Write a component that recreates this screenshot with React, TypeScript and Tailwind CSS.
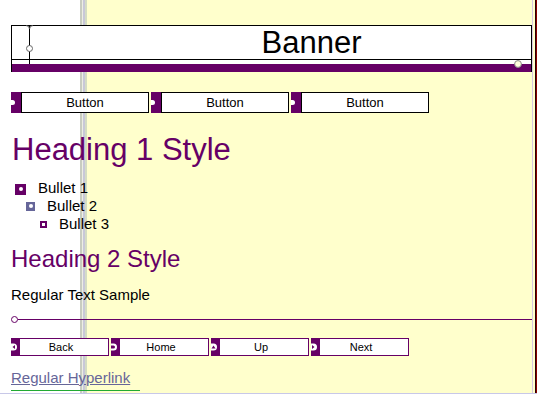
const purple = "#660066";

function TabNotch() {
  return (
    <svg width="10" height="19" viewBox="0 0 10 19" className="block">
      <path d="M0 7 h1.5 a2.5 2.5 0 0 1 0 5 H0 Z" fill="#fff" />
    </svg>
  );
}

function TopButton({ label }: { label: string }) {
  return (
    <div className="flex h-[21px] w-[138px]">
      <div className="w-[10px] h-full bg-[#660066] flex items-center">
        <TabNotch />
      </div>
      <div className="flex-1 h-full border border-black bg-white flex items-center justify-center text-[13px] leading-none text-black">
        {label}
      </div>
    </div>
  );
}

function NavIcon({ kind }: { kind: string }) {
  return (
    <svg width="8" height="16" viewBox="0 0 8 16" className="block">
      {kind === "home" ? (
        <path d="M0 4.5 h2.5 a3.5 3.5 0 0 1 0 7 H0 v-2 h2.5 a1.5 1.5 0 0 0 0 -3 H0 Z" fill="#fff" />
      ) : (
        <>
          <path d="M0 4.5 h2.5 a3.5 3.5 0 0 1 0 7 H0 Z" fill="#fff" />
          {kind === "back" && <path d="M1.5 8 L4 6 V10 Z" fill={purple} />}
          {kind === "up" && <path d="M0.5 9.5 L2.5 6.5 L4.5 9.5 Z" fill={purple} />}
          {kind === "next" && <path d="M1 6 L3.5 8 L1 10 Z" fill={purple} />}
        </>
      )}
    </svg>
  );
}

function NavButton({ label, kind }: { label: string; kind: string }) {
  return (
    <div className="flex h-[18px] w-[98px]">
      <div className="w-[8px] h-full bg-[#660066] flex items-center">
        <NavIcon kind={kind} />
      </div>
      <div className="flex-1 h-full border border-[#660066] bg-white flex items-center justify-center pr-[6px] text-[11px] leading-none text-black">
        {label}
      </div>
    </div>
  );
}

export default function App() {
  return (
    <main
      className="relative w-[537px] h-[394px] overflow-hidden pl-[11px] pr-[5px] pt-[25px] flex flex-col text-black bg-[linear-gradient(to_right,#ffffff_80px,#c8ccc0_80px,#c8ccc0_82px,#eceee4_82px,#eceee4_83px,#c8c8d8_83px,#c8c8d8_85px,#d4dcc4_85px,#d4dcc4_87px,#ffffcc_87px,#ffffcc_532px,#d8c8e0_532px,#d8c8e0_533px,#ffffcc_533px,#ffffcc_535px,#2a0000_535px,#2a0000_536px,#880000_536px)]"
      style={{ fontFamily: '"Liberation Sans", Arial, sans-serif' }}
    >
      {/* banner */}
      <section className="relative h-[47px] border-l border-t border-r border-black bg-white flex flex-col">
        <div className="h-[34px] border-b border-black pl-[80px] flex items-center justify-center text-[31px] leading-none">
          Banner
        </div>
        <div className="mt-[4px] h-[8px] bg-[#660066]" />
        <div className="absolute left-[17px] top-0 w-px h-[38px] bg-black" />
        <svg className="absolute left-[14px] top-[-1px]" width="7" height="5" viewBox="0 0 7 5">
          <path d="M0 0.5 Q3.5 0.5 3.5 4 Q3.5 0.5 7 0.5" stroke="#555" fill="none" />
        </svg>
        <svg className="absolute left-[14px] top-[19px]" width="7" height="7" viewBox="0 0 7 7">
          <circle cx="3.5" cy="3.5" r="3" fill="#fff" stroke="#666" />
        </svg>
        <svg className="absolute left-[502px] top-[34px]" width="8" height="8" viewBox="0 0 8 8">
          <circle cx="4" cy="4" r="3.4" fill="#ffffdd" stroke="#888" />
        </svg>
      </section>

      {/* top buttons */}
      <nav className="mt-[20px] flex gap-[2px]">
        <TopButton label="Button" />
        <TopButton label="Button" />
        <TopButton label="Button" />
      </nav>

      <h1 className="mt-[21px] ml-px text-[31px] leading-none text-[#660066]">Heading 1 Style</h1>

      <ul className="mt-[14px] text-[15px] leading-[18px]">
        <li className="flex items-center h-[18px]">
          <span className="ml-[4px] w-[11px] h-[11px] mt-[2px] bg-[#660066] flex items-center justify-center">
            <span className="w-[4px] h-[4px] bg-white rounded-full" />
          </span>
          <span className="ml-[12px]">Bullet 1</span>
        </li>
        <li className="flex items-center h-[18px]">
          <span className="ml-[15px] w-[9px] h-[9px] bg-[#666699] flex items-center justify-center">
            <span className="w-[4px] h-[4px] bg-white rounded-full" />
          </span>
          <span className="ml-[12px]">Bullet 2</span>
        </li>
        <li className="flex items-center h-[18px]">
          <span className="ml-[29px] w-[7px] h-[7px] border-2 border-[#660066] bg-white" />
          <span className="ml-[12px]">Bullet 3</span>
        </li>
      </ul>

      <h2 className="mt-[14px] text-[24px] leading-none text-[#660066]">Heading 2 Style</h2>

      <p className="mt-[15px] text-[15px] leading-[18px]">Regular Text Sample</p>

      <div className="mt-[12px] h-[7px] flex items-center">
        <span className="w-[7px] h-[7px] rounded-full border border-[#660066] bg-white shrink-0" />
        <span className="flex-1 h-px bg-[#660066]" />
      </div>

      <nav className="mt-[15px] flex gap-[2px]">
        <NavButton label="Back" kind="back" />
        <NavButton label="Home" kind="home" />
        <NavButton label="Up" kind="up" />
        <NavButton label="Next" kind="next" />
      </nav>

      <a href="#" className="mt-[13px] w-fit text-[15px] leading-[18px] text-[#666699] underline">
        Regular Hyperlink
      </a>
      <div className="mt-[3px] w-[129px] h-px bg-[#22aa33]" />
      <div className="mt-[2px] -ml-[11px] w-[537px] h-px bg-[#c8c8e8]" />
    </main>
  );
}
